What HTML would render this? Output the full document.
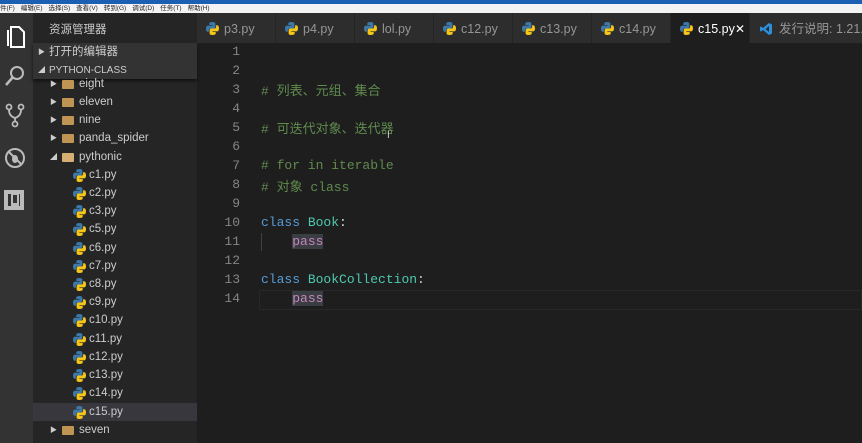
<!DOCTYPE html>
<html><head><meta charset="utf-8"><style>
*{margin:0;padding:0;box-sizing:border-box}
body{width:862px;height:443px;overflow:hidden;background:#1e1e1e;position:relative;font-family:"Liberation Sans","Noto Sans CJK SC",sans-serif}
.abs{position:absolute}
#blue{left:0;top:0;width:862px;height:5px;background:#1a5fb4}
#menu{left:0;top:4px;width:862px;height:9px;background:#f3f3f3;font-size:6.5px;color:#222;line-height:9px;white-space:nowrap}
#menu span{margin-right:6px}
#act{left:0;top:13px;width:33px;height:430px;background:#333}
#side{left:33px;top:13px;width:164px;height:430px;background:#252526;color:#ccc}
#tabs{left:197px;top:13px;width:665px;height:30px;background:#252526}
.tab{position:absolute;top:0;height:30px;width:78px;background:#2d2d2d;color:#969696;font-size:12.5px;line-height:32px;padding-left:27px;white-space:nowrap;overflow:hidden}
.tab svg{position:absolute;left:9px;top:9px}
.row{position:absolute;left:0;width:164px;height:18px;font-size:11.5px;line-height:19px;white-space:nowrap}
.py svg{position:absolute;left:40px;top:3px}
.py span{position:absolute;left:56px}
.fold .arr{position:absolute;left:17px;top:0;font-size:7px;color:#ccc}
.fold .fd{position:absolute;left:29px;top:5px;width:12px;height:9px;background:#c09553;border-radius:1px}
.fold span.t{position:absolute;left:46px}
.ln{position:absolute;left:200px;width:40px;text-align:right;color:#858585;font-family:"Liberation Mono",monospace;font-size:13px}
.code{position:absolute;left:261px;font-family:"Liberation Mono","Noto Sans CJK SC",monospace;font-size:13px;white-space:pre;color:#d4d4d4}
.c{color:#608b4e}.k{color:#569cd6}.n{color:#4ec9b0}.p{color:#c586c0;background:#3a3d41}
</style></head><body>
<svg width="0" height="0" style="position:absolute"><defs>
<g id="py"><path d="M6.5 0C3 0 3.3 1.5 3.3 1.5V3h3.3v.6H2S0 3.3 0 6.6s1.8 3.2 1.8 3.2h1.1V8.3s-.1-1.8 1.8-1.8h3s1.7 0 1.7-1.7V1.8S9.6 0 6.5 0z" fill="#3c78aa"/><path d="M6.5 13c3.5 0 3.2-1.5 3.2-1.5V10H6.4v-.6H11s2 .3 2-3-1.8-3.2-1.8-3.2h-1.1v1.5s.1 1.8-1.8 1.8h-3s-1.7 0-1.7 1.700v3S3.4 13 6.5 13z" fill="#f5c518"/></g>
</defs></svg>
<div id="blue" class="abs"></div>
<div id="menu" class="abs"><span>件(F)</span><span>编辑(E)</span><span>选择(S)</span><span>查看(V)</span><span>转到(G)</span><span>调试(D)</span><span>任务(T)</span><span>帮助(H)</span></div>
<div id="act" class="abs">
<svg class="abs" style="left:5px;top:12px" width="22" height="24" viewBox="0 0 22 24"><path d="M6 2h8l5 5v15H6z" fill="none" stroke="#fff" stroke-width="2"/><path d="M3 5v16" stroke="#fff" stroke-width="2"/></svg>
<svg class="abs" style="left:4px;top:51px" width="22" height="24" viewBox="0 0 22 24"><circle cx="13" cy="9" r="6" fill="none" stroke="#bbb" stroke-width="2"/><path d="M9 13L2 21" stroke="#bbb" stroke-width="2.5"/></svg>
<svg class="abs" style="left:5px;top:90px" width="22" height="26" viewBox="0 0 22 26"><circle cx="4" cy="4" r="2.5" fill="none" stroke="#bbb" stroke-width="1.8"/><circle cx="16" cy="4" r="2.5" fill="none" stroke="#bbb" stroke-width="1.8"/><circle cx="10" cy="21" r="2.5" fill="none" stroke="#bbb" stroke-width="1.8"/><path d="M4 7q0 6 6 8M16 7q0 6-6 8v3" fill="none" stroke="#bbb" stroke-width="1.8"/></svg>
<svg class="abs" style="left:3px;top:133px" width="24" height="24" viewBox="0 0 24 24"><circle cx="12" cy="12" r="9" fill="none" stroke="#bbb" stroke-width="2"/><path d="M5 5l14 14" stroke="#bbb" stroke-width="2"/><ellipse cx="12" cy="13" rx="3" ry="4" fill="#bbb"/></svg>
<svg class="abs" style="left:3px;top:176px" width="22" height="22" viewBox="0 0 22 22"><rect x="1" y="1" width="20" height="20" fill="#bbb"/><rect x="5" y="5" width="12" height="12" fill="#333"/><rect x="8" y="3" width="8" height="14" fill="#bbb"/><rect x="10" y="6" width="4" height="8" fill="#333"/></svg>
</div>
<div id="side" class="abs">
<div class="row" style="top:8px;left:16px;font-size:11.5px">资源管理器</div>
<div class="row" style="top:30px;height:36px;background:#333;box-shadow:0 2px 3px #111"></div>
<div class="row" style="top:30px"><span style="position:absolute;left:5px;font-size:7px">▶</span><span style="position:absolute;left:16px">打开的编辑器</span></div>
<div class="row" style="top:48px;font-size:10px"><span style="position:absolute;left:5px;font-size:7px">◢</span><span style="position:absolute;left:16px">PYTHON-CLASS</span></div>
<div class="row fold" style="top:62px"><span class="arr">▶</span><i class="fd"></i><span class="t">eight</span></div>
<div class="row fold" style="top:80px"><span class="arr">▶</span><i class="fd"></i><span class="t">eleven</span></div>
<div class="row fold" style="top:98px"><span class="arr">▶</span><i class="fd"></i><span class="t">nine</span></div>
<div class="row fold" style="top:116px"><span class="arr">▶</span><i class="fd"></i><span class="t">panda_spider</span></div>
<div class="row fold" style="top:135px"><span class="arr">◢</span><i class="fd" style="background:#d5b072"></i><span class="t">pythonic</span></div>
<div class="row py" style="top:153px"><svg width="13" height="13"><use href="#py"/></svg><span>c1.py</span></div>
<div class="row py" style="top:171px"><svg width="13" height="13"><use href="#py"/></svg><span>c2.py</span></div>
<div class="row py" style="top:189px"><svg width="13" height="13"><use href="#py"/></svg><span>c3.py</span></div>
<div class="row py" style="top:207px"><svg width="13" height="13"><use href="#py"/></svg><span>c5.py</span></div>
<div class="row py" style="top:226px"><svg width="13" height="13"><use href="#py"/></svg><span>c6.py</span></div>
<div class="row py" style="top:244px"><svg width="13" height="13"><use href="#py"/></svg><span>c7.py</span></div>
<div class="row py" style="top:262px"><svg width="13" height="13"><use href="#py"/></svg><span>c8.py</span></div>
<div class="row py" style="top:280px"><svg width="13" height="13"><use href="#py"/></svg><span>c9.py</span></div>
<div class="row py" style="top:298px"><svg width="13" height="13"><use href="#py"/></svg><span>c10.py</span></div>
<div class="row py" style="top:317px"><svg width="13" height="13"><use href="#py"/></svg><span>c11.py</span></div>
<div class="row py" style="top:335px"><svg width="13" height="13"><use href="#py"/></svg><span>c12.py</span></div>
<div class="row py" style="top:353px"><svg width="13" height="13"><use href="#py"/></svg><span>c13.py</span></div>
<div class="row py" style="top:371px"><svg width="13" height="13"><use href="#py"/></svg><span>c14.py</span></div>
<div class="row py" style="top:390px;background:#37373d"><svg width="13" height="13"><use href="#py"/></svg><span>c15.py</span></div>
<div class="row fold" style="top:408px"><span class="arr">▶</span><i class="fd"></i><span class="t">seven</span></div>
</div>
<div id="tabs" class="abs">
<div class="tab" style="left:0"><svg width="13" height="13"><use href="#py"/></svg>p3.py</div>
<div class="tab" style="left:79px"><svg width="13" height="13"><use href="#py"/></svg>p4.py</div>
<div class="tab" style="left:158px"><svg width="13" height="13"><use href="#py"/></svg>lol.py</div>
<div class="tab" style="left:237px"><svg width="13" height="13"><use href="#py"/></svg>c12.py</div>
<div class="tab" style="left:316px"><svg width="13" height="13"><use href="#py"/></svg>c13.py</div>
<div class="tab" style="left:395px"><svg width="13" height="13"><use href="#py"/></svg>c14.py</div>
<div class="tab" style="left:474px;background:#1e1e1e;color:#fff"><svg width="13" height="13"><use href="#py"/></svg>c15.py<span style="position:absolute;left:64px;font-size:12px">✕</span></div>
<div class="tab" style="left:553px;width:112px;padding-left:29px"><svg width="14" height="14" viewBox="0 0 14 14"><path d="M10 1l3 1.5v9L10 13 4 8l-2 1.5L1 9V5l1-.5L4 6zM10 4L6.5 7 10 10z" fill="#2b8fdc"/></svg>发行说明: 1.21.0</div>
</div>
<div class="ln" style="top:44px">1</div>
<div class="ln" style="top:63px">2</div>
<div class="ln" style="top:82px">3</div>
<div class="ln" style="top:101px">4</div>
<div class="ln" style="top:120px">5</div>
<div class="ln" style="top:139px">6</div>
<div class="ln" style="top:158px">7</div>
<div class="ln" style="top:177px">8</div>
<div class="ln" style="top:196px">9</div>
<div class="ln" style="top:215px">10</div>
<div class="ln" style="top:234px">11</div>
<div class="ln" style="top:253px">12</div>
<div class="ln" style="top:272px">13</div>
<div class="ln" style="top:291px">14</div>
<div class="abs" style="left:259px;top:290px;width:603px;height:20px;border:1px solid #282828"></div>
<div class="abs" style="left:261px;top:233px;width:1px;height:18px;background:#404040"></div>
<div class="code c" style="top:80px"># 列表、元组、集合</div>
<div class="code c" style="top:118px"># 可迭代对象、迭代器</div>
<div class="code c" style="top:158px"># for in iterable</div>
<div class="code c" style="top:176px"># 对象 class</div>
<div class="code" style="top:215px"><span class="k">class</span> <span class="n">Book</span>:</div>
<div class="code" style="top:234px">    <span class="p">pass</span></div>
<div class="code" style="top:272px"><span class="k">class</span> <span class="n">BookCollection</span>:</div>
<div class="code" style="top:291px">    <span class="p">pass</span></div>
<div class="abs" style="left:387px;top:130px;color:#ccc;font-size:10px">I</div>
</body></html>
